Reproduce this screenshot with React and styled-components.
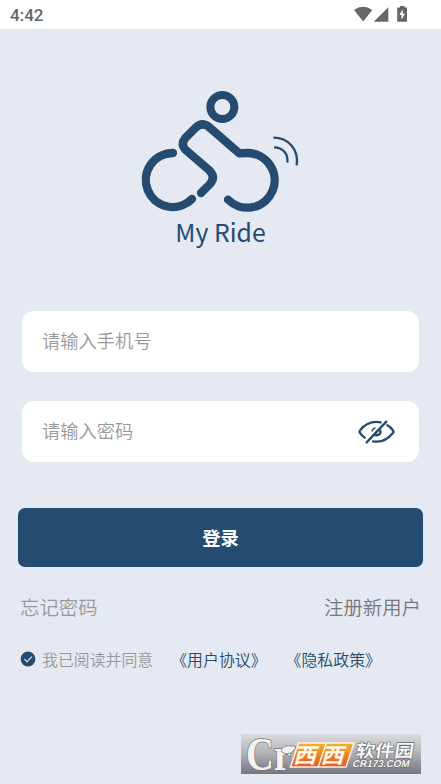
import React, { useState } from 'react';
import styled, { createGlobalStyle } from 'styled-components';

const GlobalStyle = createGlobalStyle`
  * {
    box-sizing: border-box;
  }

  body {
    margin: 0;
    background: #e5e9f1;
    font-family: 'Noto Sans CJK SC', 'Noto Sans', sans-serif;
  }
`;

const RideLogo = () => (
  <LogoArt viewBox="0 0 540 405" fill="none" stroke="#254b70" strokeLinecap="round" strokeLinejoin="round">
    <circle cx="277" cy="81" r="36" strokeWidth="24" />
    <g strokeWidth="25">
      <path d="M129 219 A81 81 0 1 0 186 357" />
      <path d="M213 339 L239 313 Q258 293 239 272 L166 209 Q151 192 166 174 L196 144 Q216 124 237 141 L328 220 Q340 219 353 219 A82 82 0 1 1 294 359" />
    </g>
    <g strokeWidth="7" strokeLinecap="butt">
      <path d="M430 173 C475 173 507 208 500 256" />
      <path d="M432 202 C459 202 475 222 472 248" />
    </g>
  </LogoArt>
);

const EyeOff = () => (
  <EyeArt viewBox="0 0 114 78">
    <path d="M71 10 C43 5 22 18 10 33 Q5 38 10 43 Q15 50 23 56" />
    <path d="M91 19 Q101 25 107 33 Q112 38 107 43 C91 63 70 71 48 67" />
    <path d="M88 8 L29 70" />
    <path d="M69 34 C74 43 65 51 54 48" />
    <path d="M45 36 Q47 29 54 27" strokeWidth="4" />
  </EyeArt>
);

const StatusIcons = () => (
  <svg width="54" height="17" viewBox="0 0 54 17" fill="#666">
    <path d="M0 4 Q9 -2.5 18.3 4 L9.2 15.5 Z" />
    <path d="M34.3 1.2 V15.7 H19.7 Z" />
    <path fillRule="evenodd" d="M46 0 H50.5 V1.5 H53 V15.8 H43.2 V1.5 H46 Z M48.8 3.5 L45.3 9 H47.5 V13.5 L51 7.8 H48.8 Z" />
  </svg>
);

const SiteBadge = () => (
  <BadgeArt viewBox="0 0 180 40">
    <defs>
      <linearGradient id="steel" x1="0" y1="0" x2="0" y2="1">
        <stop offset="0" stopColor="#dbdcdf" />
        <stop offset="0.5" stopColor="#aeb0b4" />
        <stop offset="1" stopColor="#76777c" />
      </linearGradient>
      <linearGradient id="amber" x1="0" y1="0" x2="0" y2="1">
        <stop offset="0" stopColor="#f5b12d" />
        <stop offset="1" stopColor="#e4572a" />
      </linearGradient>
    </defs>
    <rect width="180" height="40" fill="url(#steel)" />
    <Serif x="5" y="35.5" textLength="45">Cr</Serif>
    <path d="M40 17 C43 10 49 12 55 12.5 C52 20 45 22 40 17 Z" fill="#f2f2f2" stroke="#77787b" strokeWidth="0.8" />
    <path d="M57.5 9 H113 L105 33 H49.5 Z" fill="url(#amber)" stroke="#fff2df" strokeWidth="1.5" />
    <path d="M85.5 8.5 L77 33.5" stroke="#fff2df" strokeWidth="1.5" />
    <g transform="translate(52 29) skewX(-15)">
      <Orange textLength="23">西</Orange>
      <Orange x="27.5" textLength="23">西</Orange>
    </g>
    <g transform="translate(114 22.5) skewX(-8)">
      <Silver fontSize="17.5" textLength="58">软件园</Silver>
    </g>
    <g transform="translate(111 33.3) skewX(-12)">
      <Domain textLength="57">CR173.COM</Domain>
    </g>
  </BadgeArt>
);

const App = () => {
  const [agreed, setAgreed] = useState(true);

  return (
    <>
      <GlobalStyle />
      <Screen>
        <StatusBar>
          <Clock>4:42</Clock>
          <StatusIcons />
        </StatusBar>
        <Brand>
          <RideLogo />
          <BrandName>My Ride</BrandName>
        </Brand>
        <Form>
          <Field>
            <Input type="tel" placeholder="请输入手机号" />
          </Field>
          <Field>
            <Input type="password" placeholder="请输入密码" />
            <EyeOff />
          </Field>
        </Form>
        <LoginButton>登录</LoginButton>
        <Links>
          <TextLink>忘记密码</TextLink>
          <TextLink $dark>注册新用户</TextLink>
        </Links>
        <Agreement>
          <Check type="button" onClick={() => setAgreed(!agreed)}>
            <svg width="16" height="16" viewBox="0 0 16 16" fill="none">
              <circle cx="8" cy="8" r="7.4" fill={agreed ? '#254b70' : '#fff'} />
              <path d="M4.4 8.2 L7 10.7 L12 5.7" stroke="#e5e9f1" strokeWidth="1.1" />
            </svg>
          </Check>
          <span>我已阅读并同意</span>
          <Policy $gap={18}>《用户协议》</Policy>
          <Policy $gap={19}>《隐私政策》</Policy>
        </Agreement>
        <Badge>
          <SiteBadge />
        </Badge>
      </Screen>
    </>
  );
};

const Screen = styled.div`
  position: relative;
  display: flex;
  flex-direction: column;
  width: 441px;
  height: 784px;
  overflow: hidden;
  background: #e5e9f1;
`;

const StatusBar = styled.header`
  display: flex;
  align-items: center;
  justify-content: space-between;
  height: 29px;
  padding: 0 33.5px 0 10px;
  background: #fff;
`;

const Clock = styled.span`
  font-family: Roboto, sans-serif;
  font-size: 17px;
  font-weight: 500;
  line-height: 20px;
  padding-top: 1px;
  color: #666;
`;

const Brand = styled.div`
  display: flex;
  flex-direction: column;
  align-items: center;
  height: 282px;
  padding-top: 51px;
`;

const LogoArt = styled.svg`
  width: 180px;
  height: 135px;
  margin-right: 2px;
`;

const BrandName = styled.div`
  margin-top: -2px;
  font-size: 24.8px;
  line-height: 36px;
  color: #254b70;
`;

const Form = styled.div`
  display: flex;
  flex-direction: column;
  gap: 29px;
  padding: 0 22px;
`;

const Field = styled.label`
  display: flex;
  align-items: center;
  height: 61px;
  padding: 0 24px 0 20px;
  border-radius: 12px;
  background: #fff;
`;

const Input = styled.input`
  flex: 1;
  min-width: 0;
  padding: 0 0 3px;
  border: none;
  outline: none;
  background: none;
  font-family: inherit;
  font-size: 18.3px;
  font-weight: 350;
  color: #333;

  &::placeholder {
    color: #999;
  }
`;

const EyeArt = styled.svg`
  width: 38px;
  height: 26px;
  fill: none;
  stroke: #254b70;
  stroke-width: 7px;
  stroke-linecap: round;
`;

const LoginButton = styled.button`
  height: 59px;
  margin: 46px 18px 0;
  padding: 0 0 2px;
  border: none;
  border-radius: 7px;
  background: #254b70;
  color: #fff;
  font-family: inherit;
  font-size: 18.3px;
  font-weight: 700;
`;

const Links = styled.div`
  display: flex;
  justify-content: space-between;
  margin-top: 26px;
  padding: 0 20px;
`;

const TextLink = styled.span`
  font-size: 19.4px;
  font-weight: 350;
  line-height: 28px;
  color: ${({ $dark }) => ($dark ? '#777' : '#999')};
`;

const Agreement = styled.div`
  display: flex;
  align-items: center;
  height: 24px;
  margin-top: 26px;
  padding-left: 20px;
  font-size: 15.9px;
  font-weight: 350;
  color: #999;
`;

const Check = styled.button`
  display: flex;
  margin-right: 6px;
  padding: 0;
  border: none;
  background: none;
`;

const Policy = styled.span`
  margin-left: ${({ $gap }) => $gap}px;
  color: #254b70;
`;

const Badge = styled.div`
  position: absolute;
  right: 20px;
  bottom: 10px;
  display: flex;
`;

const BadgeArt = styled.svg`
  width: 180px;
  height: 40px;
  overflow: visible;
`;

const Serif = styled.text.attrs({ lengthAdjust: 'spacingAndGlyphs' })`
  font-family: 'Liberation Serif', serif;
  font-size: 47px;
  font-weight: 700;
  fill: #f2f2f2;
  stroke: #77787b;
  stroke-width: 1.6px;
  paint-order: stroke;
`;

const Orange = styled.text.attrs({ lengthAdjust: 'spacingAndGlyphs' })`
  font-size: 21px;
  font-weight: 700;
  fill: #fff7e8;
`;

const Silver = styled.text.attrs({ lengthAdjust: 'spacingAndGlyphs' })`
  font-weight: 700;
  fill: #f6f6f6;
  stroke: #67686c;
  stroke-width: 1.2px;
  paint-order: stroke;
`;

const Domain = styled(Silver)`
  font-family: 'Liberation Sans', sans-serif;
  font-size: 10px;
`;

export default App;
